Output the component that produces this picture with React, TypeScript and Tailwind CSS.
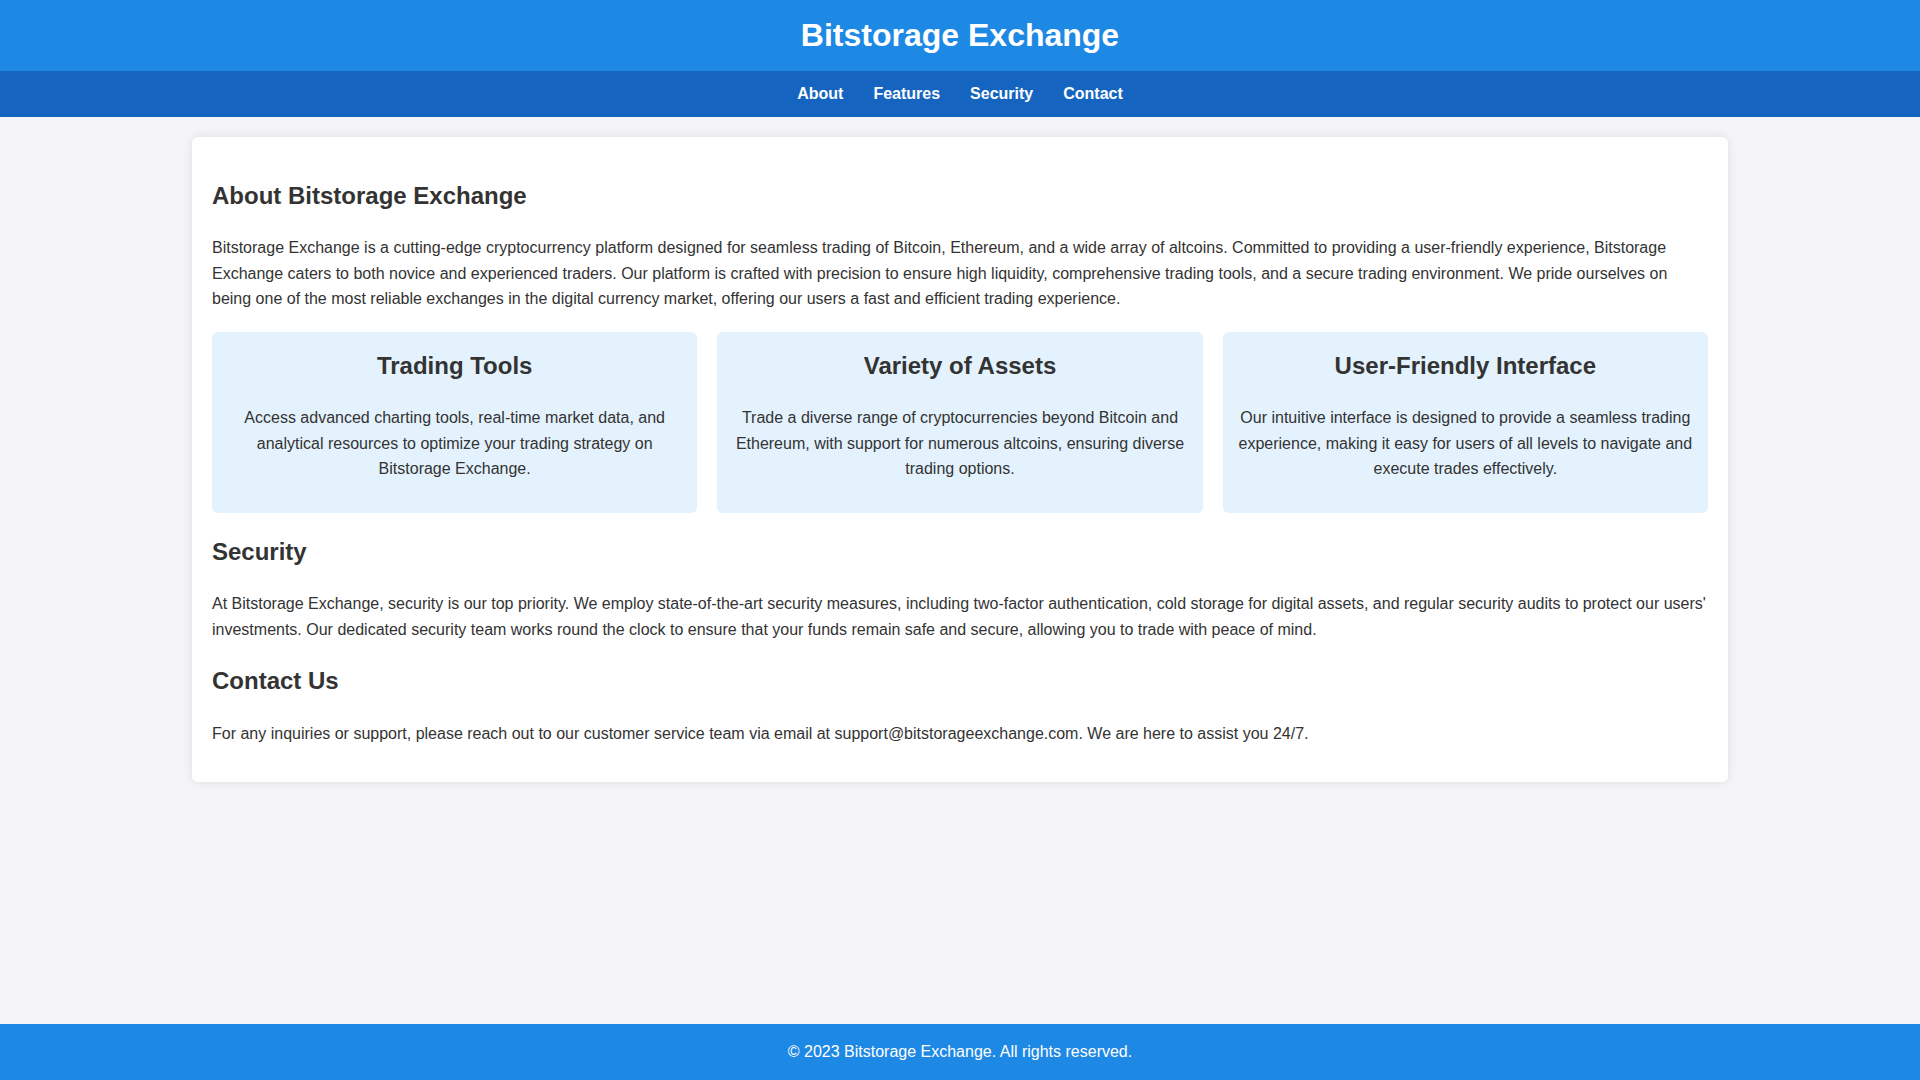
import React from "react";

const features = [
  {
    title: "Trading Tools",
    text: "Access advanced charting tools, real-time market data, and analytical resources to optimize your trading strategy on Bitstorage Exchange.",
  },
  {
    title: "Variety of Assets",
    text: "Trade a diverse range of cryptocurrencies beyond Bitcoin and Ethereum, with support for numerous altcoins, ensuring diverse trading options.",
  },
  {
    title: "User-Friendly Interface",
    text: "Our intuitive interface is designed to provide a seamless trading experience, making it easy for users of all levels to navigate and execute trades effectively.",
  },
];

export default function App() {
  return (
    <div
      className="min-h-screen flex flex-col bg-[#f4f4f9] text-[#333] text-[16px] leading-[1.6]"
      style={{ fontFamily: '"Liberation Sans", Arial, sans-serif' }}
    >
      <header className="bg-[#1e88e5] text-white text-center py-[10px]">
        <h1 className="text-[32px] font-bold leading-[1.6]">Bitstorage Exchange</h1>
      </header>
      <nav className="bg-[#1565c0] flex justify-center py-[10px]">
        {["About", "Features", "Security", "Contact"].map((l) => (
          <a key={l} href="#" className="text-white font-bold mx-[15px]">
            {l}
          </a>
        ))}
      </nav>
      <main className="w-[80%] mx-auto my-[20px] bg-white p-[20px] rounded-[6px] shadow-[0_0_10px_rgba(0,0,0,0.1)]">
        <h2 className="text-[24px] font-bold leading-[1.6] mt-[19.92px] mb-[19.92px]">About Bitstorage Exchange</h2>
        <p>
          Bitstorage Exchange is a cutting-edge cryptocurrency platform designed for seamless trading of Bitcoin, Ethereum, and a wide array of altcoins. Committed to providing a user-friendly experience, Bitstorage Exchange caters to both novice and experienced traders. Our platform is crafted with precision to ensure high liquidity, comprehensive trading tools, and a secure trading environment. We pride ourselves on being one of the most reliable exchanges in the digital currency market, offering our users a fast and efficient trading experience.
        </p>
        <div className="flex gap-[20px] my-[20px]">
          {features.map((f) => (
            <div key={f.title} className="flex-1 bg-[#e3f2fd] rounded-[6px] p-[15px] text-center">
              <h3 className="text-[24px] font-bold leading-[1.6] mb-[19.92px]">{f.title}</h3>
              <p className="mb-[16px]">{f.text}</p>
            </div>
          ))}
        </div>
        <h2 className="text-[24px] font-bold leading-[1.6] mb-[19.92px]">Security</h2>
        <p>
          At Bitstorage Exchange, security is our top priority. We employ state-of-the-art security measures, including two-factor authentication, cold storage for digital assets, and regular security audits to protect our users' investments. Our dedicated security team works round the clock to ensure that your funds remain safe and secure, allowing you to trade with peace of mind.
        </p>
        <h2 className="text-[24px] font-bold leading-[1.6] mt-[19.92px] mb-[19.92px]">Contact Us</h2>
        <p className="mb-[16px]">
          For any inquiries or support, please reach out to our customer service team via email at support@bitstorageexchange.com. We are here to assist you 24/7.
        </p>
      </main>
      <footer className="mt-auto bg-[#1e88e5] text-white text-center py-[15px]">
        © 2023 Bitstorage Exchange. All rights reserved.
      </footer>
    </div>
  );
}
